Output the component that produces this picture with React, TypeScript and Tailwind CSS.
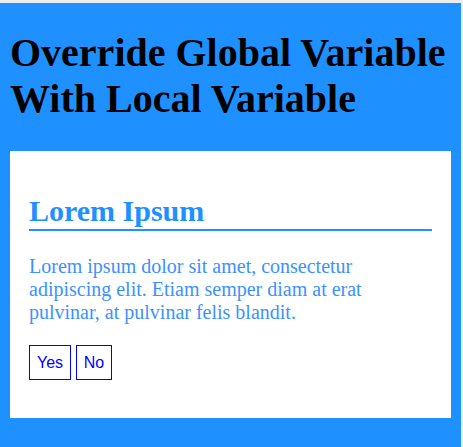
import React from "react";

export default function App() {
  return (
    <div className="min-h-[447px] bg-[#ececec] pt-[3px] pr-[2px]">
      <div className="flex min-h-[444px] flex-col bg-[#1e90ff] px-[10px] pt-[27px] pb-[29px]">
        <h1 className="font-['Liberation_Serif',serif] text-[40px] font-bold leading-[46px] text-black">
          Override Global Variable With Local Variable
        </h1>
        <div className="mt-[29px] bg-white px-[19px] pt-[43px] pb-[38px]">
          <h2 className="border-b-2 border-[#1e90ff] pb-[1px] font-['Liberation_Serif',serif] text-[30px] font-bold leading-[34px] text-[#1e90ff]">
            Lorem Ipsum
          </h2>
          <p className="mt-[24px] font-['Liberation_Serif',serif] text-[20px] leading-[23px] text-[#3b92ff]">
            Lorem ipsum dolor sit amet, consectetur adipiscing elit. Etiam semper diam at erat pulvinar, at pulvinar felis blandit.
          </p>
          <div className="mt-[21px] flex gap-[5px]">
            <button className="flex h-[35px] w-[42px] items-center justify-center border border-[#0000ff] bg-white font-['Liberation_Sans',Arial,sans-serif] text-[16px] leading-[19px] text-[#0000ff]">
              Yes
            </button>
            <button className="flex h-[35px] w-[36px] items-center justify-center border border-[#0000ff] bg-white font-['Liberation_Sans',Arial,sans-serif] text-[16px] leading-[19px] text-[#0000ff]">
              No
            </button>
          </div>
        </div>
      </div>
    </div>
  );
}
